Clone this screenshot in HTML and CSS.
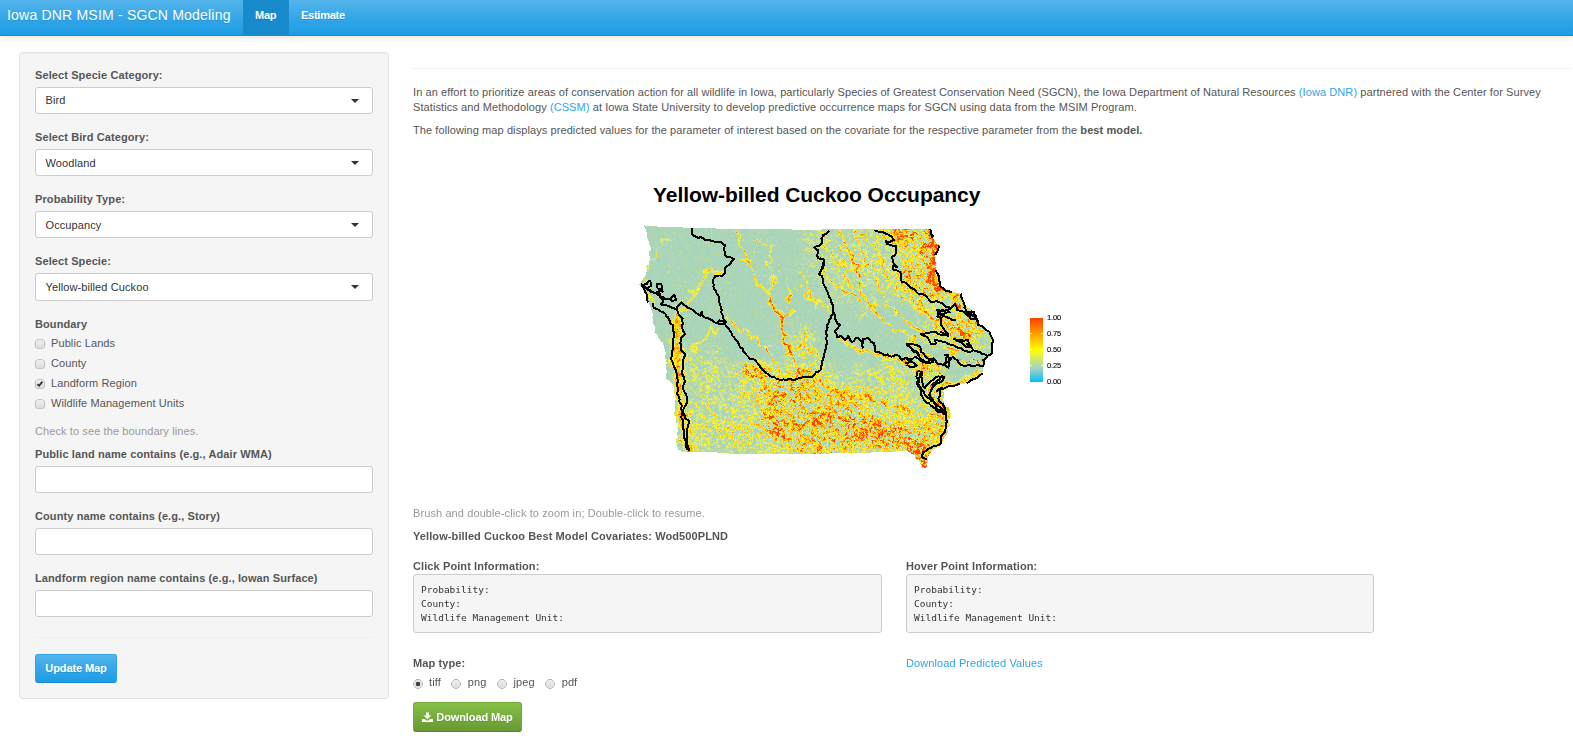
FILE: index.html
```html
<!DOCTYPE html>
<html lang="en">
<head>
<meta charset="utf-8">
<title>Iowa DNR MSIM - SGCN Modeling</title>
<link rel="stylesheet" href="styles.css">
</head>
<body>
<nav class="navbar">
  <a class="brand">Iowa DNR MSIM - SGCN Modeling</a>
  <a class="tab active">Map</a>
  <a class="tab">Estimate</a>
</nav>
<div class="layout">
  <aside class="well">
    <div class="group"><label>Select Specie Category:</label><div class="field">Bird<i class="caret"></i></div></div>
    <div class="group"><label>Select Bird Category:</label><div class="field low">Woodland<i class="caret"></i></div></div>
    <div class="group"><label>Probability Type:</label><div class="field low">Occupancy<i class="caret"></i></div></div>
    <div class="group"><label>Select Specie:</label><div class="field tall">Yellow-billed Cuckoo<i class="caret"></i></div></div>
    <div class="checks">
      <label>Boundary</label>
      <div class="check"><i class="box"></i>Public Lands</div>
      <div class="check"><i class="box"></i>County</div>
      <div class="check"><i class="box"><svg width="8" height="8" viewBox="0 0 9 9"><path d="M1.6 4.6 3.5 6.5 7.2 1.8" fill="none" stroke="#333" stroke-width="2"/></svg></i>Landform Region</div>
      <div class="check"><i class="box"></i>Wildlife Management Units</div>
    </div>
    <p class="help">Check to see the boundary lines.</p>
    <div class="group"><label>Public land name contains (e.g., Adair WMA)</label><div class="field"></div></div>
    <div class="group"><label>County name contains (e.g., Story)</label><div class="field"></div></div>
    <div class="group"><label>Landform region name contains (e.g., Iowan Surface)</label><div class="field"></div></div>
    <hr class="side-rule">
    <button class="btn primary">Update Map</button>
  </aside>
  <main class="main">
    <hr class="top-rule">
    <p class="intro">In an effort to prioritize areas of conservation action for all wildlife in Iowa, particularly Species of Greatest Conservation Need (SGCN), the Iowa Department of Natural Resources <a>(Iowa DNR)</a> partnered with the Center for Survey<br>Statistics and Methodology <a>(CSSM)</a> at Iowa State University to develop predictive occurrence maps for SGCN using data from the MSIM Program.</p>
    <p class="second">The following map displays predicted values for the parameter of interest based on the covariate for the respective parameter from the <b>best model.</b></p>
    <section class="plot">
      <h2>Yellow-billed Cuckoo Occupancy</h2>
      <div class="plot-row">
        <div class="map">
          <canvas id="raster" width="400" height="260"></canvas>
          <svg class="lines" width="400" height="260" viewBox="0 0 1200 780" id="lines"></svg>
        </div>
        <div class="legend">
          <div class="ramp"><i></i><i></i><i></i></div>
          <ul><li>1.00</li><li>0.75</li><li>0.50</li><li>0.25</li><li>0.00</li></ul>
        </div>
      </div>
    </section>
    <p class="help brush">Brush and double-click to zoom in; Double-click to resume.</p>
    <p class="covariates">Yellow-billed Cuckoo Best Model Covariates: Wod500PLND</p>
    <div class="cols">
      <div><label>Click Point Information:</label><pre>Probability:
County:
Wildlife Management Unit:</pre></div>
      <div><label>Hover Point Information:</label><pre>Probability:
County:
Wildlife Management Unit:</pre></div>
    </div>
    <div class="cols bottom">
      <div>
        <label>Map type:</label>
        <div class="radios">
          <span><i class="radio on"></i>tiff</span><span><i class="radio"></i>png</span><span><i class="radio"></i>jpeg</span><span><i class="radio"></i>pdf</span>
        </div>
        <button class="btn success"><svg width="11" height="11" viewBox="0 0 11 11"><path fill="#fff" d="M4 .5h3v3h2.4L5.5 7.3 1.6 3.5H4zM0 7h3l1.4 1.4h2.2L8 7h3v3H0z"/></svg>Download Map</button>
      </div>
      <div><a>Download Predicted Values</a></div>
    </div>
  </main>
</div>
<script src="map.js"></script>
</body>
</html>
```

FILE: styles.css
```css
* { box-sizing: border-box; }
body { margin: 0; background: #fff; color: #555; font: 11px/15px "Liberation Sans", Arial, sans-serif; letter-spacing: .1px; overflow: hidden; }
p, h2, ul, pre { margin: 0; padding: 0; }
a { color: #2fa4e7; }
label, .covariates { display: block; font-weight: bold; white-space: nowrap; }
i { font-style: normal; }

.navbar { display: flex; height: 36px; background: linear-gradient(#54b4eb, #2fa4e7 60%, #1d9ce5); border-bottom: 1px solid #178acc; box-shadow: 0 1px 8px rgba(0,0,0,.12); color: #fff; letter-spacing: 0; text-shadow: 0 1px 0 rgba(0,0,0,.15); }
.navbar a { color: #fff; }
.brand { width: 243px; padding-left: 7px; font-size: 14px; line-height: 31px; white-space: nowrap; letter-spacing: .2px; }
.tab { padding: 0 12px; font-weight: bold; line-height: 31px; letter-spacing: -.25px; }
.active { width: 46px; background: #178acc; }

.layout { display: flex; padding: 16px 0 0 19px; }
.well { width: 370px; height: 647px; padding: 15px 15px 0; border: 1px solid #e3e3e3; border-radius: 4px; background: #f5f5f5; box-shadow: inset 0 1px 1px rgba(0,0,0,.05); flex: none; }
.group { height: 62px; }
.well label { height: 19px; line-height: 15px; }
.field { display: flex; align-items: center; justify-content: space-between; width: 338px; height: 27px; padding: 0 13px 0 9.5px; border: 1px solid #ccc; border-radius: 3px; background: #fff; color: #333; }
.low { padding-top: 1px; }
.tall { height: 28px; }
.caret { border: 4px solid transparent; border-top-color: #333; border-bottom: 0; }
.checks { padding-top: 1px; height: 108px; }
.checks label { height: 16px; }
.check { display: flex; align-items: center; height: 20px; gap: 7.5px; }
.box { width: 8px; height: 8px; margin: 1px 0 0 .5px; border-radius: 2px; background: linear-gradient(#eee, #ddd); box-shadow: 0 0 0 .6px #999; display: flex; }
.help { color: #999; height: 23px; white-space: nowrap; }
.side-rule { border: 0; border-top: 1px solid #eee; margin: 4px 0 16px; }
.btn { display: flex; align-items: center; justify-content: center; font: bold 11px/15px "Liberation Sans", Arial, sans-serif; letter-spacing: -.1px; color: #fff; border: 1px solid; border-radius: 3px; text-shadow: 0 1px 0 rgba(0,0,0,.12); padding: 0; white-space: nowrap; }
.primary { width: 82px; height: 29px; background: linear-gradient(#54b4eb, #2fa4e7 60%, #1d9ce5); border-color: #2fa4e7 #2fa4e7 #178acc; }

.main { margin-left: 24px; width: 1158px; }
.top-rule { border: 0; border-top: 1px solid #eee; margin: 16px 0; }
.intro, .second { white-space: nowrap; letter-spacing: .088px; }
.intro { height: 38px; }
.plot { height: 368px; padding-top: 43px; }
.plot h2 { padding-left: 240px; color: #000; font-size: 21px; line-height: 28px; letter-spacing: -.06px; white-space: nowrap; }
.plot-row { display: flex; padding-left: 217px; margin-top: 6px; }
.map { display: grid; width: 400px; height: 260px; }
.map > * { grid-area: 1 / 1; }
.lines path { fill: none; stroke: #000; stroke-width: 6; shape-rendering: crispEdges; stroke-linejoin: round; }
.legend { display: flex; height: 64px; margin-top: 103px; }
.ramp { display: flex; flex-direction: column; gap: 15px; padding-top: 15px; width: 13px; background: linear-gradient(#ff3f00, #ffa000 25%, #ff0 50%, #b0d8b0 75%, #a0d2c8 80%, #00bfff); }
.ramp i { height: 1px; border: solid rgba(255,255,255,.8); border-width: 0 2px; }
.legend ul { list-style: none; color: #000; font-size: 7.5px; line-height: 16px; letter-spacing: -.15px; margin: -8px 0 0 4px; -webkit-text-stroke: .1px #000; }
.covariates { height: 30px; }
.cols { display: grid; grid-template-columns: 493px 491px; height: 97px; }
.cols pre { width: 469px; height: 59px; padding: 8px 7px; border: 1px solid #ccc; border-radius: 3px; background: #f5f5f5; color: #333; font: 9.5px/14px "DejaVu Sans Mono", monospace; letter-spacing: 0; }
.cols div + div pre { width: 468px; }
.radios { display: flex; height: 24px; gap: 11px; margin-top: 4px; }
.radios span { display: flex; gap: 7px; }
.radio { width: 8px; height: 8px; margin: 5px .5px; border-radius: 50%; background: linear-gradient(#eee, #ddd); box-shadow: 0 0 0 .7px #888; }
.radio.on { background: radial-gradient(circle, #444 0 2px, #e5e5e5 2.6px); }
.success { width: 109px; height: 30px; margin-top: 3px; gap: 3px; background: linear-gradient(#88c149, #73a839 60%, #699934); border-color: #73a839 #73a839 #59822c; }
```

FILE: map.js
```js
// State outline; all coordinates are in thirds of a pixel.
const outline = [[42,31],[103,36],[218,39],[298,42],[548,44],[663,42],[900,42],[907,70],[928,92],[916,120],[918,175],[928,190],[930,213],[948,228],[992,235],[1002,265],[1030,292],[1045,325],[1078,350],[1087,370],[1087,413],[1062,435],[1058,475],[1040,490],[1010,505],[955,516],[940,528],[938,558],[960,585],[960,630],[948,660],[932,692],[900,710],[892,730],[893,757],[875,760],[865,738],[845,715],[832,708],[690,714],[570,716],[300,716],[247,711],[155,712],[138,690],[145,640],[135,600],[137,560],[133,510],[108,490],[108,420],[100,385],[82,370],[72,340],[68,290],[55,260],[45,230],[30,210],[40,190],[50,170],[58,130],[62,100],[50,70],[48,45]];

const borders = [
  "185,39 187,57 200,66 220,70 245,78 275,82 284,90 285,120 300,125 313,133 300,147 285,160 283,178 255,184 248,195 250,215 265,240 272,275 280,310 285,328 295,340 318,375 345,415 360,432 375,435 398,465 420,482 440,492 500,492 528,486 548,485 572,465 580,430 587,400 590,380 588,355 592,330 610,295 608,270 592,230 578,190 567,178 580,160 582,135 565,130 563,105 553,98 573,88 580,60 598,47",
  "32,208 50,208 60,198 62,213 50,218 65,232 98,230 80,216 82,207 94,207 95,222 85,240 105,252 122,250 132,240 137,255 126,258 118,250",
  "35,208 55,226 75,234 90,238 98,255 92,268 125,278 140,285 142,275 155,262 170,275 195,292 212,302 215,290 220,305 235,310 262,325 268,316 288,320 280,328 262,325",
  "35,210 52,240 54,262 M68,265 72,278 100,292 118,315 128,330 132,365 130,400 123,430 132,455 142,480 143,540 155,575 155,600 160,640 163,670 168,690 173,705",
  "142,285 147,300 158,310 157,340 165,357 153,375 153,405 165,418 160,440 155,470 163,490 160,520 170,545 168,570 158,590 165,610 178,620 170,645 170,680 177,707",
  "733,46 765,55 785,65 792,75 778,82 768,78 770,86 798,92 798,115 786,125 795,150 802,155 788,152 788,163 810,172 815,200 835,210 860,232 885,240 905,262 920,258 942,270 962,280 975,268 982,285 1000,290",
  "610,290 615,310 630,330 615,350 620,365 632,362 645,375 655,362 665,382 678,368 694,378 698,398 700,372 715,368 732,385 735,410 785,425 800,420 815,435 830,430 842,437 855,425 878,440 890,443 910,430 925,448 942,450 955,420 945,420 962,432 955,458 945,445 970,425 990,448 1010,452 1060,452 1060,435 1073,425",
  "962,282 930,290 922,285 922,305 935,308 932,330 955,362 910,352 873,358 895,370 903,386 918,386 915,375 970,390 1015,410 1030,405 1050,412 1070,422",
  "922,285 950,285 960,292 930,298 948,305 968,316 978,316",
  "970,370 1000,378 1015,375 1025,398 1002,390 970,372 M1010,385 1028,400 M930,350 955,362",
  "828,388 860,390 880,415 910,440 888,445 868,425 845,400 828,388 M840,395 868,420",
  "860,470 875,470 875,500 885,520 900,500 920,485 942,487 938,497 910,515 898,540 915,565 945,590 948,600 920,588 908,575 880,550 863,510 860,470",
  "870,475 865,505 885,540 910,560 925,585 950,595 M940,482 905,510 M920,530 935,518 925,550 945,580 952,620 945,650 935,660 932,685 900,700 880,710 878,730 890,733",
  "825,445 845,440 860,452 850,456 830,450 M828,432 850,430",
  "900,42 907,70 M928,92 916,120 M918,165 928,190 930,213 948,228 965,231 M992,236 1002,265 1005,275 M1012,288 1038,304 1045,330 1078,350 1087,370 1087,413 1062,435 M1058,475 1040,490 1010,505 M990,508 925,523",
  "1002,275 1010,290 1032,292 1040,310 1022,312 1012,292 1030,302 1040,320 M1000,290 1020,306",
  "M570,130 580,132 582,145 575,165"
];

let seed = 7;
const rand = () => ((seed = (seed * 1664525 + 1013904223) >>> 0) / 4294967296);

// Subdivide each border and nudge the new points, so that it meanders by a pixel or so.
function meander(d) {
  return d.replace(/^M/, "").split("M").map(part => {
    const pts = part.trim().split(" ").map(p => p.split(",").map(Number));
    const out = [pts[0]];
    for (let i = 1; i < pts.length; i++) {
      const a = pts[i - 1], b = pts[i], len = Math.hypot(b[0] - a[0], b[1] - a[1]);
      const n = Math.max(1, Math.round(len / 8));
      for (let k = 1; k < n; k++) out.push([a[0] + (b[0] - a[0]) * k / n + (rand() - .5) * 5.5, a[1] + (b[1] - a[1]) * k / n + (rand() - .5) * 5.5]);
      out.push(b);
    }
    return "M" + out.map(p => p.map(c => c.toFixed(1)).join(",")).join(" ");
  }).join("");
}
document.getElementById("lines").innerHTML = borders.map(d => `<path d="${meander(d)}"/>`).join("");

// River valleys: strength, spread (px), points.
const rivers = [
  [.5,1,[[318,45],[330,85],[348,140],[380,180],[385,205],[420,235],[425,265]]],
  [.42,.8,[[380,70],[425,100],[420,150],[430,210],[420,235]]],
  [1,2.1,[[420,265],[455,310],[458,360],[475,415]]],
  [.85,1.2,[[475,415],[495,445],[515,480]]],
  [.6,1,[[465,190],[475,250],[488,290],[455,315]]],
  [.55,1.3,[[285,300],[350,355],[400,395],[435,430],[455,480]]],
  [.45,2,[[285,175],[230,170],[205,215],[180,250],[150,285]]],
  [.3,2,[[260,340],[235,370],[180,410],[165,445]]],
  [.6,4,[[140,300],[140,370],[140,440],[150,540],[160,620],[170,700]]],
  [.6,1.2,[[136,320],[138,370],[138,430],[150,530]]],
  [.5,2,[[50,210],[62,265]]],
  [.3,.8,[[110,70],[75,110],[50,160]]],
  [.42,1.3,[[515,170],[530,240],[570,275],[600,285]]],
  [.42,1.3,[[520,350],[530,390],[570,430]]],
  [.42,1.3,[[500,400],[525,370],[520,345]]],
  [.62,1.2,[[625,50],[650,110],[695,185],[700,235],[720,265],[765,320],[785,350],[830,360],[870,410]]],
  [.55,1.1,[[670,50],[700,110],[725,165],[750,235],[800,300],[850,330],[880,360]]],
  [.58,1.1,[[575,170],[620,220],[680,245]]],
  [.48,1,[[695,65],[740,100],[770,185],[810,240],[880,290]]],
  [.45,1,[[580,60],[600,120],[640,150],[660,210]]],
  [.4,1,[[720,265],[690,310]]],
  [.65,2,[[630,370],[690,405],[760,425],[830,440],[870,470]]],
  [.65,1.3,[[840,240],[870,270],[900,300],[950,330],[1020,360]]],
  [.7,1.3,[[840,385],[900,430],[930,470],[900,520],[930,580]]],
  [.85,1,[[990,440],[1060,437]]],
  [.65,1.3,[[940,390],[975,410],[985,445]]],
  [.55,2.2,[[1055,475],[1000,500],[935,515]]],
  [.75,2.6,[[907,50],[915,110],[910,160],[925,220]]],
  [.45,1.4,[[570,490],[640,540],[740,555],[830,580]]],
  [.55,2,[[410,590],[435,640],[470,670]]],
  [.65,1.5,[[490,635],[550,620],[600,600]]],
  [.45,1.6,[[340,440],[360,475],[410,490]]]
];
// Woodland areas: x, y, rx, ry, strength.
const blobs = [
  [840,60,70,40,.46],[900,110,30,110,.52],[850,180,60,45,.4],[910,225,60,22,.48],[800,60,50,25,.26],[985,258,30,25,.44],
  [990,345,75,40,.38],[1040,330,40,50,.3],[480,540,100,50,.44],[370,470,50,20,.46],[440,620,50,60,.42],
  [530,620,90,45,.38],[600,605,90,50,.44],[690,640,80,36,.56],[780,665,80,36,.54],[860,700,40,38,.62],
  [640,560,110,45,.34],[880,650,60,40,.36],[930,600,35,80,.36],[560,680,150,40,.38],[330,650,110,50,.24],
  [240,620,60,80,.2],[220,480,70,60,.16],[350,540,60,40,.2],[780,500,120,50,.18],[800,580,100,40,.25],[880,460,30,28,.4],
  [530,480,60,30,.34],[560,75,35,35,.17],[710,150,140,100,.14],[520,400,35,50,.19],[880,745,20,22,.8]
];

const W = 400, H = 260;
const makeGrid = () => Array.from({ length: 401 * 401 }, rand);
const g1 = makeGrid(), g2 = makeGrid();
function noise(g, x, y) {
  const xi = Math.floor(x), yi = Math.floor(y), u = x - xi, v = y - yi;
  const at = (a, b) => g[((b + 401) % 401) * 401 + (a + 401) % 401];
  return (at(xi, yi) * (1 - u) + at(xi + 1, yi) * u) * (1 - v) + (at(xi, yi + 1) * (1 - u) + at(xi + 1, yi + 1) * u) * v;
}
function inside(x, y) {
  let hit = false;
  for (let i = 0, j = outline.length - 1; i < outline.length; j = i++) {
    const [ax, ay] = outline[i], [bx, by] = outline[j];
    if ((ay > y) !== (by > y) && x < (bx - ax) * (y - ay) / (by - ay) + ax) hit = !hit;
  }
  return hit;
}
function segDist(x, y, a, b) {
  const dx = b[0] - a[0], dy = b[1] - a[1];
  const t = Math.max(0, Math.min(1, ((x - a[0]) * dx + (y - a[1]) * dy) / (dx * dx + dy * dy)));
  return Math.hypot(x - a[0] - t * dx, y - a[1] - t * dy) / 3;
}
const stops = [[0,[166,211,190]],[.22,[170,213,184]],[.34,[208,225,140]],[.46,[255,250,40]],[.72,[255,170,0]],[.94,[255,85,0]],[1.05,[255,63,0]]];
function color(v) {
  for (let i = 1; i < stops.length; i++) if (v <= stops[i][0]) {
    const [p, a] = stops[i - 1], [q, b] = stops[i], t = (v - p) / (q - p);
    return a.map((c, k) => c + (b[k] - c) * t);
  }
  return stops[stops.length - 1][1];
}
const ctx = document.getElementById("raster").getContext("2d");
const img = ctx.createImageData(W, H);
for (let py = 0; py < H; py++) for (let px = 0; px < W; px++) {
  const x = px * 3 + 1.5, y = py * 3 + 1.5;
  if (!inside(x + (noise(g2, px / 3, py / 3) - .5) * 8, y)) continue;
  let area = .05;
  for (const [bx, by, rx, ry, s] of blobs) {
    const d = ((x - bx) / rx) ** 2 + ((y - by) / ry) ** 2;
    area = Math.max(area, s * Math.exp(-d * .5) + .02);
  }
  const wx = x + (noise(g1, px / 5, py / 5) - .5) * 30, wy = y + (noise(g2, px / 5 + 60, py / 5) - .5) * 30;
  let valley = 0;
  for (const [s, w, pts] of rivers) for (let i = 1; i < pts.length; i++) {
    const d = segDist(wx, wy, pts[i - 1], pts[i]);
    if (d < w * 4) valley = Math.max(valley, s * Math.exp(-((d / w) ** 2) * .9));
  }
  // Branching texture: sharp ridges of noise, small clumps and single-pixel grain.
  const warp = noise(g2, px / 8, py / 8) * 2.5;
  const ridge = (1 - Math.abs(noise(g1, px / 5 + warp, py / 5 + warp) * 2 - 1)) ** 3;
  const clump = noise(g2, px / 1.7 + 90, py / 1.7);
  const clump2 = noise(g1, px / 1.3 + 30, py / 1.3 + 70);
  const pattern = Math.max(0, ridge * .8 + (clump - .5) * 1.7 + (clump2 - .5) * 1.2 + (rand() - .5) * 1.2 + .2);
  let v = .14 + area * (.22 + 1.25 * pattern);
  v += valley * (.3 + .6 * rand() + .7 * (clump - .3));
  if (rand() < .03) v += .2 * rand();
  const c = color(Math.max(0, Math.min(1.05, v))), k = (py * W + px) * 4;
  const shade = (noise(g1, px / 2, py / 2) - .5) * 5;
  img.data[k] = c[0] + shade; img.data[k + 1] = c[1] + shade; img.data[k + 2] = c[2] + shade; img.data[k + 3] = 255;
}
ctx.putImageData(img, 0, 0);
```
